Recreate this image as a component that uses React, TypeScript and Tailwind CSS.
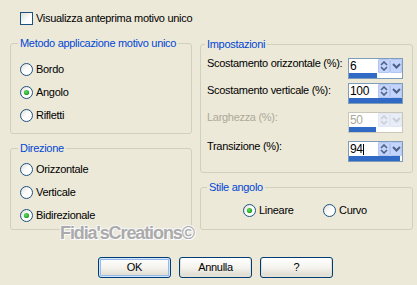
import React from 'react'

const font = { fontFamily: '"Liberation Sans", Arial, sans-serif' }

function Radio({ checked }: { checked?: boolean }) {
  return (
    <svg width="13" height="13" viewBox="0 0 13 13" className="shrink-0">
      <defs>
        <linearGradient id="rg" x1="0" y1="0" x2="1" y2="1">
          <stop offset="0" stopColor="#dcd9cf" />
          <stop offset="0.5" stopColor="#ffffff" />
          <stop offset="1" stopColor="#ffffff" />
        </linearGradient>
        <radialGradient id="dot" cx="0.4" cy="0.4" r="0.6">
          <stop offset="0" stopColor="#5fe05f" />
          <stop offset="1" stopColor="#219e21" />
        </radialGradient>
      </defs>
      <circle cx="6.5" cy="6.5" r="6" fill="url(#rg)" stroke="#1c5180" strokeWidth="1" />
      {checked && <circle cx="6.5" cy="6.5" r="2.6" fill="url(#dot)" />}
    </svg>
  )
}

function RadioItem({ label, checked, className = '' }: { label: string; checked?: boolean; className?: string }) {
  return (
    <div className={`flex items-center gap-[3px] h-[13px] ${className}`}>
      <Radio checked={checked} />
      <span className="leading-[13px]">{label}</span>
    </div>
  )
}

function Group({ title, titleLeft, className = '', children }: { title: string; titleLeft: string; className?: string; children: React.ReactNode }) {
  return (
    <div className={`relative border border-[#d0d0bf] rounded-[3px] ${className}`}>
      <span className={`absolute -top-[7px] ${titleLeft} px-[2px] bg-[#ece9d8] text-[#0046d5] leading-[13px]`}>
        {title}
      </span>
      {children}
    </div>
  )
}

function Spin({ value, pct, disabled, cursor }: { value: string; pct: number; disabled?: boolean; cursor?: boolean }) {
  const btn = disabled ? 'bg-[#e8edf8] border-[#e0e6f2]' : 'bg-[#c4d4fb] border-[#b2c6f3]'
  const arrow = disabled ? '#c8cdd6' : '#4d6185'
  return (
    <div className={`w-[55px] h-[21px] border ${disabled ? 'border-[#c9c7ba]' : 'border-[#7f9db9]'} bg-white flex flex-col`}>
      <div className="flex h-[14px]">
        <div className={`flex-1 pl-[1px] text-[12px] leading-[14px] ${disabled ? 'text-[#aca899]' : 'text-black'}`}>
          {value}
          {cursor && <span className="inline-block w-[1px] h-[11px] bg-black align-[-2px]" />}
        </div>
        <div className={`w-[12px] h-[14px] border rounded-[1px] ${btn} flex items-center justify-center`}>
          <svg width="8" height="10" viewBox="0 0 8 10">
            <path d="M1 4 L4 1 L7 4" fill="none" stroke={arrow} strokeWidth="1.6" />
            <path d="M1 6 L4 9 L7 6" fill="none" stroke={arrow} strokeWidth="1.6" />
          </svg>
        </div>
        <div className={`w-[12px] h-[14px] border rounded-[1px] ${btn} flex items-center justify-center`}>
          <svg width="9" height="6" viewBox="0 0 9 6">
            <path d="M1 1 L4.5 4.5 L8 1" fill="none" stroke={arrow} strokeWidth="2" />
          </svg>
        </div>
      </div>
      <div className="h-[5px]">
        <div className="h-[5px] bg-[#316ac5]" style={{ width: `${pct}%` }} />
      </div>
    </div>
  )
}

function Button({ label, isDefault }: { label: string; isDefault?: boolean }) {
  return (
    <button
      className={`w-[73px] h-[21px] rounded-[3px] border border-[#003c74] bg-gradient-to-b from-[#ffffff] via-[#f4f3ee] to-[#dcd8cc] text-black leading-[17px] ${
        isDefault ? 'shadow-[inset_0_0_0_1px_#cee7ff,inset_0_0_0_2px_#98b8ea]' : 'shadow-[inset_0_-1px_0_1px_#e3e0d5]'
      }`}
    >
      {label}
    </button>
  )
}

export default function App() {
  return (
    <div className="relative w-[417px] h-[285px] bg-[#ece9d8] overflow-hidden text-[11px] tracking-[-0.3px] text-black" style={font}>
      <div className="pt-[12px] pl-[20px] flex items-center gap-[3px] h-[25px]">
        <svg width="13" height="13" viewBox="0 0 13 13" className="shrink-0">
          <defs>
            <linearGradient id="cg" x1="0" y1="0" x2="1" y2="1">
              <stop offset="0" stopColor="#dcdad0" />
              <stop offset="0.6" stopColor="#ffffff" />
            </linearGradient>
          </defs>
          <rect x="0.5" y="0.5" width="12" height="12" fill="url(#cg)" stroke="#1c5180" />
        </svg>
        <span className="leading-[13px]">Visualizza anteprima motivo unico</span>
      </div>

      <div className="flex pl-[10px] gap-[8px] mt-[18px]">
        <div className="w-[182px] flex flex-col gap-[14px]">
          <Group title="Metodo applicazione motivo unico" titleLeft="left-[7px]" className="h-[91px] pt-[19px] pl-[9px]">
            <div className="flex flex-col gap-[10px]">
              <RadioItem label="Bordo" />
              <RadioItem label="Angolo" checked />
              <RadioItem label="Rifletti" />
            </div>
          </Group>
          <Group title="Direzione" titleLeft="left-[7px]" className="h-[82px] pt-[14px] pl-[9px]">
            <div className="flex flex-col gap-[10px]">
              <RadioItem label="Orizzontale" />
              <RadioItem label="Verticale" />
              <RadioItem label="Bidirezionale" checked />
            </div>
          </Group>
        </div>

        <div className="w-[213px] flex flex-col gap-[14px] mt-[1px]">
          <Group title="Impostazioni" titleLeft="left-[4px]" className="h-[129px] pt-[13px] pl-[6px] pr-[9px]">
            <div className="flex flex-col">
              <div className="flex">
                <span className="flex-1 leading-[13px] -mt-[1px]">Scostamento orizzontale (%):</span>
                <Spin value="6" pct={53} />
              </div>
              <div className="flex mt-[4px]">
                <span className="flex-1 leading-[13px] mt-[1px]">Scostamento verticale (%):</span>
                <Spin value="100" pct={100} />
              </div>
              <div className="flex mt-[8px]">
                <span className="flex-1 leading-[13px] -mt-[1px] text-[#aca899]">Larghezza (%):</span>
                <Spin value="50" pct={51} disabled />
              </div>
              <div className="flex mt-[8px]">
                <span className="flex-1 leading-[13px] -mt-[1px]">Transizione (%):</span>
                <Spin value="94" pct={96} cursor />
              </div>
            </div>
          </Group>
          <Group title="Stile angolo" titleLeft="left-[6px]" className="h-[43px] pt-[16px] pl-[42px]">
            <div className="flex">
              <RadioItem label="Lineare" checked className="w-[80px]" />
              <RadioItem label="Curvo" />
            </div>
          </Group>
        </div>
      </div>

      <div className="flex pl-[98px] gap-[8px] mt-[27px]">
        <Button label="OK" isDefault />
        <Button label="Annulla" />
        <Button label="?" />
      </div>

      <span
        className="absolute left-[60px] top-[222px] text-[18px] font-bold tracking-[-1.1px] text-[#ababab] leading-[22px] [text-shadow:1px_1px_0_#ffffff,-1px_-1px_0_#f4f4f4,1px_-1px_0_#f4f4f4,-1px_1px_0_#f4f4f4]"
      >
        Fidia'sCreations©
      </span>
    </div>
  )
}
